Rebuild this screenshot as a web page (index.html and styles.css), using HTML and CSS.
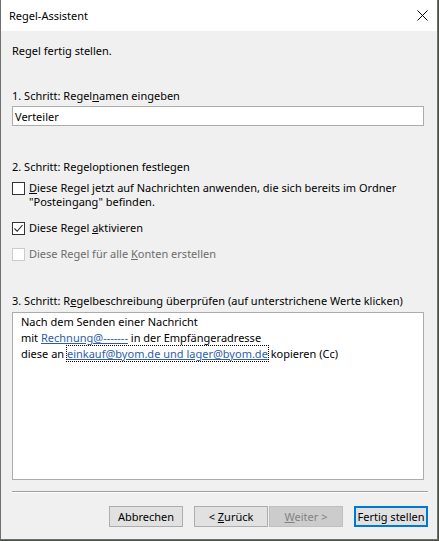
FILE: index.html
```html
<!DOCTYPE html>
<html lang="de">
<head>
    <meta charset="UTF-8">
    <meta name="viewport" content="width=device-width, initial-scale=1.0">
    <title>Regel-Assistent</title>
    <link rel="stylesheet" href="styles.css">
</head>
<body>
    <div class="window">
        <div class="titlebar">
            <span class="title">Regel-Assistent</span>
            <svg class="close" width="11" height="11" viewBox="0 0 11 11">
                <path d="M0.5 0.5 L10.5 10.5 M10.5 0.5 L0.5 10.5" stroke="#000" stroke-width="1" fill="none"/>
            </svg>
        </div>
        <div class="content">
            <div class="intro">Regel fertig stellen.</div>

            <div class="step">1. Schritt: Regel<u>n</u>amen eingeben</div>
            <input class="name-input" type="text" value="Verteiler">

            <div class="step step-options">2. Schritt: Regeloptionen festlegen</div>
            <div class="options">
                <label class="option multi">
                    <span class="box"></span>
                    <span class="option-text"><u>D</u>iese Regel jetzt auf Nachrichten anwenden, die sich bereits im Ordner<br>"Posteingang" befinden.</span>
                </label>
                <label class="option">
                    <span class="box checked">
                        <svg width="11" height="11" viewBox="0 0 11 11">
                            <path d="M1.5 5.5 L4.2 8.3 L9.5 2" stroke="#222" stroke-width="1.1" fill="none"/>
                        </svg>
                    </span>
                    <span class="option-text">Diese Regel <u>a</u>ktivieren</span>
                </label>
                <label class="option disabled">
                    <span class="box"></span>
                    <span class="option-text">Diese Regel für alle <u>K</u>onten erstellen</span>
                </label>
            </div>

            <div class="step step-desc">3. Schritt: R<u>e</u>gelbeschreibung überprüfen (auf unterstrichene Werte klicken)</div>
            <div class="description">
                <div>Nach dem Senden einer Nachricht</div>
                <div>mit <a class="value" href="#">Rechnung@-------</a> in der Empfängeradresse</div>
                <div>diese an <a class="value focused" href="#">einkauf@byom.de und lager@byom.de</a> kopieren (Cc)</div>
            </div>

            <div class="separator"></div>

            <div class="buttons">
                <button class="btn">Abbrechen</button>
                <button class="btn btn-back">&lt; <u>Z</u>urück</button>
                <button class="btn btn-next" disabled><u>W</u>eiter &gt;</button>
                <button class="btn btn-default">Fertig stellen</button>
            </div>
        </div>
    </div>
</body>
</html>
```
FILE: styles.css
```css
body {
    margin: 0;
    background-color: #4a4f45;
    font-family: "Noto Sans", sans-serif;
    font-size: 11px;
    color: #000;
}
.window {
    box-sizing: border-box;
    width: 438px;
    height: 540px;
    background-color: #f0f0f0;
    border: 1px solid #6f6f6f;
    border-top: none;
    display: flex;
    flex-direction: column;
}
.titlebar {
    height: 31px;
    flex-shrink: 0;
    background-color: #fff;
    display: flex;
    align-items: center;
    justify-content: space-between;
    padding: 0 9px 0 8px;
}
.title {
    font-size: 11px;
    line-height: 15px;
    margin-top: -1px;
}
.close {
    margin-top: -1px;
}
.content {
    padding: 12px 13px 0 11px;
    display: flex;
    flex-direction: column;
    line-height: 15px;
}
.intro {
    height: 15px;
}
.step {
    margin-top: 30px;
}
.name-input {
    box-sizing: border-box;
    margin: 3px 0 0;
    width: 412px;
    height: 20px;
    border: 1px solid #acacac;
    background-color: #fff;
    font-family: "Noto Sans", sans-serif;
    font-size: 11px;
    padding: 0 2px;
    outline: none;
}
.step-options {
    margin-top: 33px;
}
.options {
    display: flex;
    flex-direction: column;
    margin-top: 7px;
    gap: 11px;
}
.option {
    display: flex;
    align-items: flex-start;
    gap: 4px;
    line-height: 15px;
}
.option .box {
    margin-top: 2px;
}
.option.multi {
    line-height: 14px;
}
.option.multi .box {
    margin-top: 1px;
}
.box {
    box-sizing: border-box;
    width: 13px;
    height: 13px;
    flex-shrink: 0;
    border: 1px solid #333;
    background-color: #fff;
    display: flex;
    align-items: center;
    justify-content: center;
}
.option.disabled {
    color: #6d6d6d;
}
.option.disabled .box {
    border-color: #cccccc;
}
.step-desc {
    margin-top: 32px;
}
.description {
    box-sizing: border-box;
    margin-top: 4px;
    width: 412px;
    height: 168px;
    background-color: #fff;
    border: 1px solid #acacac;
    padding: 1px 8px 0;
    line-height: 16px;
}
.value {
    color: #2e5ea8;
    text-decoration: underline;
}
.value.focused {
    outline: 1px dotted #000;
    outline-offset: 0;
}
.separator {
    margin-top: 11px;
    height: 1px;
    width: 416px;
    background-color: #a0a0a0;
    border-bottom: 1px solid #fff;
}
.buttons {
    display: flex;
    justify-content: flex-end;
    margin-top: 13px;
    margin-right: -4px;
}
.btn {
    box-sizing: border-box;
    width: 74px;
    height: 21px;
    padding: 0;
    margin-left: 11px;
    background-color: #e1e1e1;
    border: 1px solid #adadad;
    font-family: "Noto Sans", sans-serif;
    font-size: 11px;
    color: #000;
}
.btn-next {
    margin-left: 1px;
}
.btn:disabled {
    background-color: #cccccc;
    border-color: #bfbfbf;
    color: #838383;
}
.btn-default {
    border: 2px solid #0078d7;
}
```
